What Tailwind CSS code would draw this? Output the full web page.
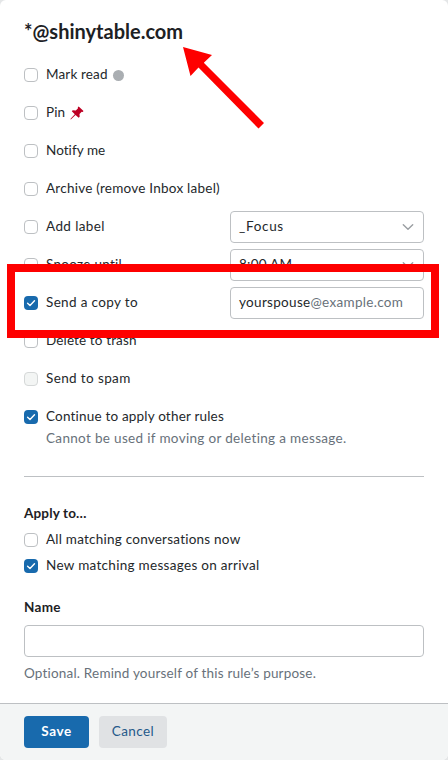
<!DOCTYPE html>
<html lang="en">
<head>
<meta charset="utf-8">
<title>Rule actions</title>
<script src="https://cdn.jsdelivr.net/npm/@tailwindcss/browser@4"></script>
</head>
<body class="bg-[#e4e6e7]">
<svg class="hidden"><symbol id="check" viewBox="0 0 14 14"><path d="M3.6 7.3 6 9.5 10.5 4.8" fill="none" stroke="#fff" stroke-width="1.4" stroke-linecap="round" stroke-linejoin="round"/></symbol>
<symbol id="chevron" viewBox="0 0 12 8"><path d="M1.3 1.7 6 6.3 10.7 1.7" fill="none" stroke="#9a9ea2" stroke-width="1.4" stroke-linecap="round" stroke-linejoin="round"/></symbol></svg>
<main class="relative flex h-[760px] w-[448px] flex-col overflow-hidden rounded-[6px] bg-white font-['Lato',sans-serif] text-[13.5px] leading-[20px] tracking-[0.25px] text-[#24282b]">
  <h1 class="flex h-14 items-start px-6 pt-[18px] text-[20px] leading-[26px] font-bold tracking-[0px] text-[#1d2124]"><span>*@shinytable.com</span></h1>
  <section class="px-6">
    <div class="flex h-[38px] items-center gap-2"><i class="size-[14px] rounded-[4px] border border-[#bdc0c3]"></i><span class="pb-0.5 tracking-[0.15px]">Mark read</span><i class="-ml-[3px] size-[11px] rounded-full bg-[#aaaeb2]"></i></div>
    <div class="flex h-[38px] items-center gap-2"><i class="size-[14px] rounded-[4px] border border-[#bdc0c3]"></i><span class="pb-0.5 tracking-[0.1px]">Pin</span>
      <svg class="-ml-[3px] size-[14px]" viewBox="0 0 14 14"><path d="M8.7.5 13.5 5.1 12.8 6 11.7 5.8 9.5 8.1 9.7 10.8 8.7 11.8 5.5 8.9 1.1 13.3.5 13.4.6 12.7 4.8 8.2 1.8 5.2 2.7 4.3 5.8 4.5 8 2.2 7.8 1.2Z" fill="#bd0024"/></svg></div>
    <div class="flex h-[38px] items-center gap-2"><i class="size-[14px] rounded-[4px] border border-[#bdc0c3]"></i><span class="pb-0.5 tracking-[0.05px]">Notify me</span></div>
    <div class="flex h-[38px] items-center gap-2"><i class="size-[14px] rounded-[4px] border border-[#bdc0c3]"></i><span class="pb-0.5 tracking-[0.24px]">Archive (remove Inbox label)</span></div>
    <div class="flex h-[38px] items-center gap-2"><i class="size-[14px] rounded-[4px] border border-[#bdc0c3]"></i><span class="pb-0.5 tracking-[0.4px]">Add label</span>
      <div class="ml-auto flex h-8 w-[194px] items-center justify-between rounded-[4px] border border-[#bdc0c3] pr-[9px] pl-2"><span class="pb-0.5 tracking-[0.7px]">_Focus</span><svg class="h-2 w-3"><use href="#chevron"/></svg></div></div>
    <div class="flex h-[38px] items-center gap-2"><i class="size-[14px] rounded-[4px] border border-[#bdc0c3]"></i><span class="pb-0.5 tracking-[0.28px]">Snooze until</span>
      <div class="ml-auto flex h-8 w-[194px] items-center justify-between rounded-[4px] border border-[#bdc0c3] pr-[9px] pl-2"><span class="pb-0.5 tracking-[0.25px]">8:00 AM</span><svg class="h-2 w-3"><use href="#chevron"/></svg></div></div>
    <div class="flex h-[38px] items-center gap-2"><svg class="size-[14px] rounded-[4px] bg-[#186aad]"><use href="#check"/></svg><span class="pb-0.5 tracking-[0.35px]">Send a copy to</span>
      <div class="ml-auto flex h-8 w-[194px] items-center rounded-[4px] border border-[#bdc0c3] px-2"><span class="pb-0.5 tracking-[0.31px]">yourspouse<span class="text-[#68717a]">@example.com</span></span></div></div>
    <div class="flex h-[38px] items-center gap-2"><i class="size-[14px] rounded-[4px] border border-[#bdc0c3]"></i><span class="pb-0.5 tracking-[0.13px]">Delete to trash</span></div>
    <div class="flex h-[38px] items-center gap-2"><i class="size-[14px] rounded-[4px] border border-[#d5d8d8] bg-[#f3f5f4]"></i><span class="pb-0.5 tracking-[0.38px]">Send to spam</span></div>
    <div class="flex h-[38px] items-center gap-2"><svg class="size-[14px] rounded-[4px] bg-[#186aad]"><use href="#check"/></svg><span class="pb-0.5 tracking-[0.19px]">Continue to apply other rules</span></div>
    <p class="-mt-2 pl-[22px] tracking-[0.33px] text-[#68717a]">Cannot be used if moving or deleting a message.</p>
  </section>
  <hr class="mx-6 mt-7 border-[#bdc0c3]">
  <section class="px-6 pt-[26px]">
    <h2 class="font-bold tracking-[0.15px] text-[#1d2124]">Apply to…</h2>
    <div class="mt-1 flex h-[26px] items-center gap-2"><i class="size-[14px] rounded-[4px] border border-[#bdc0c3]"></i><span class="pb-0.5 tracking-[0.23px]">All matching conversations now</span></div>
    <div class="flex h-[26px] items-center gap-2"><svg class="size-[14px] rounded-[4px] bg-[#186aad]"><use href="#check"/></svg><span class="pb-0.5 tracking-[0.3px]">New matching messages on arrival</span></div>
    <h2 class="mt-[18px] font-bold tracking-[0.3px] text-[#1d2124]">Name</h2>
    <div class="mt-2 h-8 rounded-[4px] border border-[#bdc0c3]"></div>
    <p class="mt-[6px] tracking-[0.19px] text-[#68717a]">Optional. Remind yourself of this rule’s purpose.</p>
  </section>
  <footer class="mt-auto flex h-[57px] gap-[10px] border-t border-[#bdc0c3] bg-[#f3f5f5] px-6 pt-3">
    <button class="h-8 w-[65px] rounded-[4px] bg-[#186aad] pb-0.5 font-bold tracking-[0.6px] text-white">Save</button>
    <button class="h-8 w-[68px] rounded-[4px] bg-[#e0e2e4] pb-0.5 tracking-[0.43px] text-[#25598a]">Cancel</button>
  </footer>
  <div class="absolute top-[264px] left-[7px] h-[74px] w-[432px] border-8 border-[#fe0000]"></div>
  <svg class="absolute top-0 left-0 h-[140px] w-[300px]" viewBox="0 0 300 140"><path d="M183 47 212 55 203.8 62.8 264 123 258.5 128.5 198.5 67.5 190.5 76Z" fill="#fe0000"/></svg>
</main>
</body>
</html>
